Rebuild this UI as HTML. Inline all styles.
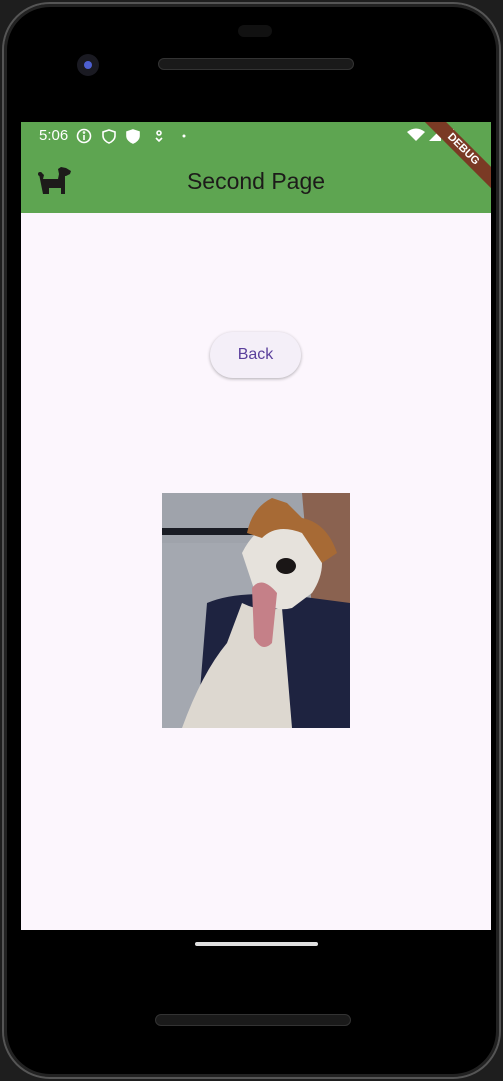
<!DOCTYPE html>
<html><head><meta charset="utf-8"><style>
*{margin:0;padding:0;box-sizing:border-box}
body{width:503px;height:1081px;background:#1e1e1e;position:relative;overflow:hidden;font-family:"Liberation Sans",sans-serif}
.phone{position:absolute;left:2px;top:2px;width:499px;height:1077px;background:#000;border-radius:48px;border:2px solid #555;box-shadow:inset 0 0 0 3px #222}
.screen{position:absolute;left:21px;top:122px;width:470px;height:808px;background:#fcf6fd;overflow:hidden}
.status{position:absolute;left:0;top:0;width:470px;height:28px;background:#5ea551;color:#fff;font-size:15px}
.appbar{position:absolute;left:0;top:28px;width:470px;height:63px;background:#5ea551}
.title{position:absolute;left:0;width:470px;text-align:center;top:18px;font-size:23px;color:#1d1b1a}
.btn{position:absolute;left:189px;top:210px;width:91px;height:46px;border-radius:23px;background:#f4eff8;box-shadow:0 1px 3px rgba(0,0,0,.3);color:#5a3f9c;font-size:16px;text-align:center;line-height:46px}
.ribbon{position:absolute;left:382px;top:20px;width:120px;height:15px;background:#7a3a24;transform:rotate(45deg);color:#fff;font-size:11px;font-weight:bold;text-align:center;line-height:15px;z-index:3}
</style></head><body>
<div class="phone"></div>
<div style="position:absolute;left:238px;top:25px;width:34px;height:12px;border-radius:6px;background:#111"></div>
<div style="position:absolute;left:158px;top:58px;width:196px;height:12px;border-radius:6px;background:#1a1a1a;border:1px solid #333"></div>
<div style="position:absolute;left:77px;top:54px;width:22px;height:22px;border-radius:50%;background:#1a1a22"><div style="margin:7px;width:8px;height:8px;border-radius:50%;background:#4d5fd0"></div></div>
<div style="position:absolute;left:155px;top:1014px;width:196px;height:12px;border-radius:6px;background:#1a1a1a;border:1px solid #333"></div>
<div class="screen">
 <div class="status">
  <span style="position:absolute;left:18px;top:5px">5:06</span>
  <svg style="position:absolute;left:55px;top:6px" width="110" height="16" fill="none" stroke="#fff" stroke-width="1.6">
   <circle cx="8" cy="8" r="6.5"/><line x1="8" y1="7" x2="8" y2="12"/><circle cx="8" cy="4.5" r=".5"/>
   <path d="M33 2l6 2v4c0 3-3 6-6 7c-3-1-6-4-6-7V4z"/>
   <path d="M57 2l6 2v4c0 3-3 6-6 7c-3-1-6-4-6-7V4z" fill="#fff"/>
   <circle cx="83" cy="5" r="2"/><path d="M80 10l3 3 3-3"/>
   <circle cx="108" cy="8" r="1.5" fill="#fff" stroke="none"/>
  </svg>
  <svg style="position:absolute;left:386px;top:5px" width="60" height="18" fill="#fff"><path d="M0 5Q9-2 18 5L9 14Z"/><path d="M22 14L34 2V14Z"/><rect x="40" y="2" width="7" height="13"/></svg>
  <div class="ribbon">DEBUG</div>
 </div>
 <div class="appbar">
  <svg style="position:absolute;left:10px;top:10px" width="50" height="40" fill="#1d1b1a">
   <path d="M8 14l2-2 3 3 v0 L12 19h15l1-5-1-5 3-2 5 1 5 3-1 3-4 2h-1v18h-4v-6H18v6h-6z"/>
   <circle cx="9" cy="14" r="2"/>
  </svg>
  <div class="title">Second Page</div>
 </div>
 <div class="btn">Back</div>
 <svg style="position:absolute;left:141px;top:371px" width="188" height="235">
  <rect width="188" height="235" fill="#9fa3ab"/>
  <rect x="0" y="35" width="110" height="7" fill="#1a1c24"/>
  <rect x="0" y="50" width="110" height="185" fill="#a4a8b0"/>
  <path d="M140 0H188V120L150 115Z" fill="#8a6250"/>
  <path d="M35 235L45 110Q80 95 150 105L188 110V235Z" fill="#1e2340"/>
  <path d="M20 235Q40 180 65 150L80 110Q100 120 120 115L130 235Z" fill="#ddd8d0"/>
  <path d="M80 60Q95 30 120 30L150 40Q170 70 150 100L130 115Q110 120 95 105Z" fill="#e6e2dc"/>
  <path d="M85 40Q90 15 110 5L125 10L140 25Q165 30 175 60L160 70L140 40Q115 30 100 45Z" fill="#a76a35"/>
  <ellipse cx="124" cy="73" rx="10" ry="8" fill="#1a1616"/>
  <path d="M90 95Q100 82 115 100L110 150Q100 160 92 145Z" fill="#c58088"/>
 </svg>
</div>
<div style="position:absolute;left:195px;top:942px;width:123px;height:4px;border-radius:2px;background:#e0e0e0"></div>
</body></html>
